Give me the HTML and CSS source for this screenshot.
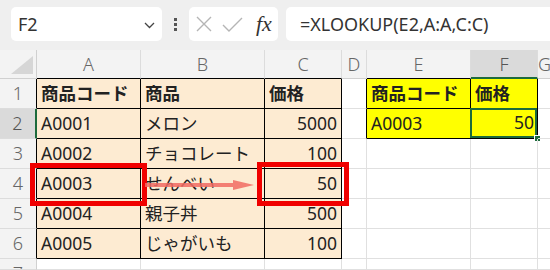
FILE: index.html
```html
<!DOCTYPE html>
<html lang="ja">
<head>
    <meta charset="UTF-8">
    <title>XLOOKUP</title>
    <link rel="stylesheet" href="styles.css">
</head>
<body>
    <div class="toolbar">
        <div class="namebox">
            <span>F2</span>
            <svg class="chev" width="11" height="7" viewBox="0 0 11 7"><path d="M1 1 L5.5 5.5 L10 1" fill="none" stroke="#444" stroke-width="1.3"/></svg>
        </div>
        <div class="dots">
            <i></i><i></i><i></i>
        </div>
        <div class="fbtns">
            <svg width="16" height="16" viewBox="0 0 16 16"><path d="M1 1 L15 15 M15 1 L1 15" stroke="#b5b5b5" stroke-width="1.4"/></svg>
            <svg width="21" height="15" viewBox="0 0 21 15"><path d="M1 8 L7 14 L20 1" fill="none" stroke="#b5b5b5" stroke-width="1.4"/></svg>
            <span class="fx">fx</span>
        </div>
        <div class="formula">=XLOOKUP(E2,A:A,C:C)</div>
    </div>

    <div class="sheet">
        <!-- 見出し行 -->
        <div class="corner"><svg width="22" height="18" viewBox="0 0 22 18"><polygon points="22,0 22,18 0,18" fill="#d6d6d6"/></svg></div>
        <div class="hd bk">A</div>
        <div class="hd bk">B</div>
        <div class="hd bk">C</div>
        <div class="hd">D</div>
        <div class="hd bk">E</div>
        <div class="hd sel">F</div>
        <div class="hd">G</div>

        <!-- 1 -->
        <div class="rh bk">1</div>
        <div class="c tb b">商品コード</div>
        <div class="c tb b">商品</div>
        <div class="c tb b">価格</div>
        <div class="c bkr"></div>
        <div class="c yl b">商品コード</div>
        <div class="c yl b">価格</div>
        <div class="c"></div>

        <!-- 2 -->
        <div class="rh bk sel">2</div>
        <div class="c tb">A0001</div>
        <div class="c tb">メロン</div>
        <div class="c tb num">5000</div>
        <div class="c bkr"></div>
        <div class="c yl">A0003</div>
        <div class="c yl num active">50<span class="handle"></span></div>
        <div class="c"></div>

        <!-- 3 -->
        <div class="rh bk">3</div>
        <div class="c tb">A0002</div>
        <div class="c tb">チョコレート</div>
        <div class="c tb num">100</div>
        <div class="c"></div>
        <div class="c"></div>
        <div class="c"></div>
        <div class="c"></div>

        <!-- 4 -->
        <div class="rh bk">4</div>
        <div class="c tb">A0003</div>
        <div class="c tb">せんべい</div>
        <div class="c tb num">50</div>
        <div class="c"></div>
        <div class="c"></div>
        <div class="c"></div>
        <div class="c"></div>

        <!-- 5 -->
        <div class="rh bk">5</div>
        <div class="c tb">A0004</div>
        <div class="c tb">親子丼</div>
        <div class="c tb num">500</div>
        <div class="c"></div>
        <div class="c"></div>
        <div class="c"></div>
        <div class="c"></div>

        <!-- 6 -->
        <div class="rh bk">6</div>
        <div class="c tb">A0005</div>
        <div class="c tb">じゃがいも</div>
        <div class="c tb num">100</div>
        <div class="c"></div>
        <div class="c"></div>
        <div class="c"></div>
        <div class="c"></div>

        <!-- 7 (下端で切れる) -->
        <div class="rh cut">7</div>
        <div class="c"></div>
        <div class="c"></div>
        <div class="c"></div>
        <div class="c"></div>
        <div class="c"></div>
        <div class="c"></div>
        <div class="c"></div>

        <!-- 注釈 -->
        <div class="mark mark-a"></div>
        <div class="mark mark-c"></div>
        <svg class="arrow" width="110" height="10" viewBox="0 0 110 10">
            <rect x="0" y="3" width="90" height="4" fill="#f26b63"/>
            <polygon points="88,0 109,5 88,10" fill="#f26b63"/>
        </svg>
    </div>
</body>
</html>
```

FILE: styles.css
```css
*{
    margin: 0;
    padding: 0;
    box-sizing: border-box;
}
body{
    width: 550px;
    height: 270px;
    overflow: hidden;
    background: #ffffff;
    font-family: "Noto Sans", "Noto Sans CJK JP", sans-serif;
    color: #222;
}

/* 上部の数式バー */
.toolbar{
    display: flex;
    align-items: center;
    height: 50px;
    padding: 7px 0 9px 11px;
    background: #efefef;
}
.namebox{
    display: flex;
    align-items: center;
    justify-content: space-between;
    width: 151px;
    height: 34px;
    padding: 0 7px 0 7px;
    background: #fff;
    border-radius: 5px;
    font-size: 18px;
    color: #333;
}
.namebox .chev{
    margin-top: 2px;
}
.dots{
    display: flex;
    flex-direction: column;
    gap: 2px;
    width: 27px;
    align-items: center;
}
.dots i{
    display: block;
    width: 3px;
    height: 3px;
    background: #555;
}
.fbtns{
    display: flex;
    align-items: center;
    gap: 10px;
    width: 89px;
    height: 34px;
    padding-left: 7px;
    background: #fff;
    border-radius: 5px;
}
.fbtns .fx{
    margin-left: 3px;
    font-family: "Liberation Serif", serif;
    font-style: italic;
    font-size: 22px;
    color: #333;
}
.formula{
    flex: 1;
    height: 34px;
    margin-left: 8px;
    padding-left: 14px;
    line-height: 34px;
    background: #fff;
    border-radius: 5px 0 0 5px;
    font-size: 18px;
    color: #333;
}

/* シート */
.sheet{
    position: relative;
    display: grid;
    grid-template-columns: 37px 104px 124px 77px 25px 104px 67px 1fr;
    grid-template-rows: 29px repeat(6, 30px) 11px;
}
.corner, .hd, .rh{
    background: #f3f3f3;
    color: #666;
    font-weight: 300;
    font-size: 18px;
}
.corner{
    display: flex;
    justify-content: flex-end;
    align-items: flex-end;
    padding: 0 3px 4px 0;
    border-right: 1px solid #d0d0d0;
    border-bottom: 1px solid #d0d0d0;
}
.hd{
    text-align: center;
    line-height: 28px;
    border-right: 1px solid #dcdcdc;
    border-bottom: 1px solid #d0d0d0;
}
.hd.bk{
    border-bottom-color: #000;
}
.hd.sel{
    background: #dadada;
    border-bottom: 2px solid #1d6b3c;
    color: #555;
}
.rh{
    text-align: center;
    line-height: 29px;
    border-right: 1px solid #d0d0d0;
    border-bottom: 1px solid #dcdcdc;
}
.rh.cut{
    overflow: hidden;
}
.rh.bk{
    border-right-color: #000;
}
.rh.sel{
    background: #dadada;
    border-right: 2px solid #1d6b3c;
    color: #555;
}

.c{
    position: relative;
    padding: 0 4px 0 4px;
    font-size: 17.5px;
    line-height: 29px;
    white-space: nowrap;
    border-right: 1px solid #e0e0e0;
    border-bottom: 1px solid #e0e0e0;
}
.c.tb{
    background: #fdebd2;
    border-color: #000;
}
.c.yl{
    background: #ffff00;
    border-color: #000;
}
.c.bkr{
    border-right-color: #000;
}
.c.b{
    font-weight: bold;
}
.c.num{
    text-align: right;
}
.c.active{
    box-shadow: inset 0 0 0 2px #1d6b3c;
    margin: -1px 0 0 -1px;
    padding-right: 3px;
}
.handle{
    position: absolute;
    right: -4px;
    bottom: -4px;
    width: 7px;
    height: 7px;
    background: #1d6b3c;
    border: 1px solid #fff;
}

/* 赤枠と矢印 */
.mark{
    position: absolute;
    border: 5px solid #f00000;
}
.mark-a{
    left: 30px;
    top: 113px;
    width: 117px;
    height: 43px;
}
.mark-c{
    left: 257px;
    top: 112px;
    width: 92px;
    height: 44px;
}
.arrow{
    position: absolute;
    left: 145px;
    top: 130px;
    opacity: 0.85;
}
```
